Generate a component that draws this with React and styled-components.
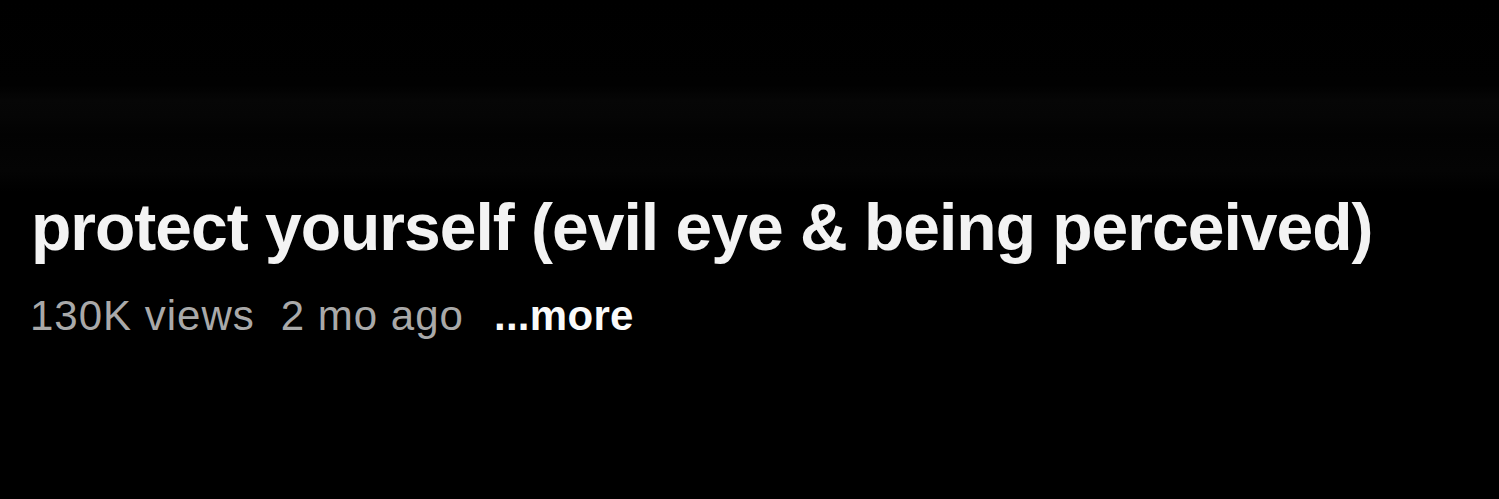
import React from "react";
import styled, { createGlobalStyle } from "styled-components";

const GlobalStyle = createGlobalStyle`
  html, body {
    margin: 0;
    padding: 0;
    background: #000;
  }
  * {
    box-sizing: border-box;
  }
`;

const Screen = styled.div`
  width: 100%;
  height: 100vh;
  overflow: hidden;
  background:
    linear-gradient(
      to bottom,
      #000 0px,
      #010101 85px,
      #060606 100px,
      #050505 116px,
      #020202 135px,
      #040404 170px,
      #000 192px
    );
  padding: 188px 0 0 30px;
  font-family: "Liberation Sans", Arial, sans-serif;
`;

const Title = styled.h1`
  margin: 0 0 0 1px;
  font-size: 66px;
  line-height: 1.2;
  font-weight: 700;
  letter-spacing: -1px;
  color: #f3f3f3;
  white-space: nowrap;
`;

const Meta = styled.div`
  margin-top: 24px;
  display: flex;
  align-items: baseline;
  gap: 26px;
  font-size: 42px;
  line-height: 1.2;
  color: #a9a9a9;
  letter-spacing: 1px;
  white-space: nowrap;
`;

const More = styled.span`
  margin-left: 4px;
  color: #fafafa;
  font-weight: 700;
  letter-spacing: 0.3px;
  cursor: pointer;
`;

const VideoInfo = ({ title, views, age }) => (
  <>
    <Title>{title}</Title>
    <Meta>
      <span>{views}</span>
      <span>{age}</span>
      <More>...more</More>
    </Meta>
  </>
);

export default function App() {
  return (
    <>
      <GlobalStyle />
      <Screen>
        <VideoInfo
          title="protect yourself (evil eye & being perceived)"
          views="130K views"
          age="2 mo ago"
        />
      </Screen>
    </>
  );
}
